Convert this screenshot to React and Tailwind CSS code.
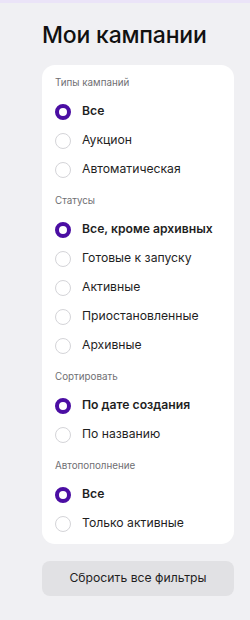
import React, { useState } from 'react';

const sections = [
  { title: 'Типы кампаний', options: ['Все', 'Аукцион', 'Автоматическая'] },
  { title: 'Статусы', options: ['Все, кроме архивных', 'Готовые к запуску', 'Активные', 'Приостановленные', 'Архивные'] },
  { title: 'Сортировать', options: ['По дате создания', 'По названию'] },
  { title: 'Автопополнение', options: ['Все', 'Только активные'] },
];

const Radio = ({ checked }) => (
  <span
    className={`w-4 h-4 rounded-full shrink-0 box-border ${checked ? 'border-[4px] border-[#4b0ea3] bg-white' : 'border border-[#d4d4d8] bg-white'}`}
  />
);

export default function App() {
  const [selected, setSelected] = useState(sections.map(() => 0));

  const pick = (si, oi) => {
    const next = [...selected];
    next[si] = oi;
    setSelected(next);
  };

  return (
    <div
      className="w-[250px] h-[620px] bg-[#f0f0f3] border-t-[3px] border-[#ebe4f8] flex flex-col items-start pl-[42px] overflow-hidden"
      style={{ fontFamily: 'Inter, "Noto Sans", sans-serif' }}
    >
      {/* Title */}
      <h1 className="mt-[18px] text-[23px] leading-[28px] font-medium text-[#111] tracking-[-0.2px]">
        Мои кампании
      </h1>

      {/* Filters card */}
      <div className="mt-[16px] w-[192px] bg-white rounded-[13px] pt-[11px] pb-[6px] px-[13px]">
        {sections.map((section, si) => (
          <div key={section.title} className={si > 0 ? 'mt-[10px]' : ''}>
            <p className="h-[14px] leading-[14px] text-[9.8px] text-[#6f6f73] mb-[7px]">{section.title}</p>
            {section.options.map((opt, oi) => {
              const checked = selected[si] === oi;
              return (
                <button
                  key={opt}
                  onClick={() => pick(si, oi)}
                  className="h-[29px] w-full flex items-center gap-[11px] text-left"
                >
                  <Radio checked={checked} />
                  <span className={`text-[12.2px] text-[#1f1f1f] whitespace-nowrap ${checked ? 'font-semibold' : 'font-normal'}`}>
                    {opt}
                  </span>
                </button>
              );
            })}
          </div>
        ))}
      </div>

      {/* Reset */}
      <button className="mt-[17px] w-[192px] h-[35px] rounded-[8px] bg-[#e1e1e4] text-[12.2px] text-[#1f1f1f]">
        Сбросить все фильтры
      </button>
    </div>
  );
}
